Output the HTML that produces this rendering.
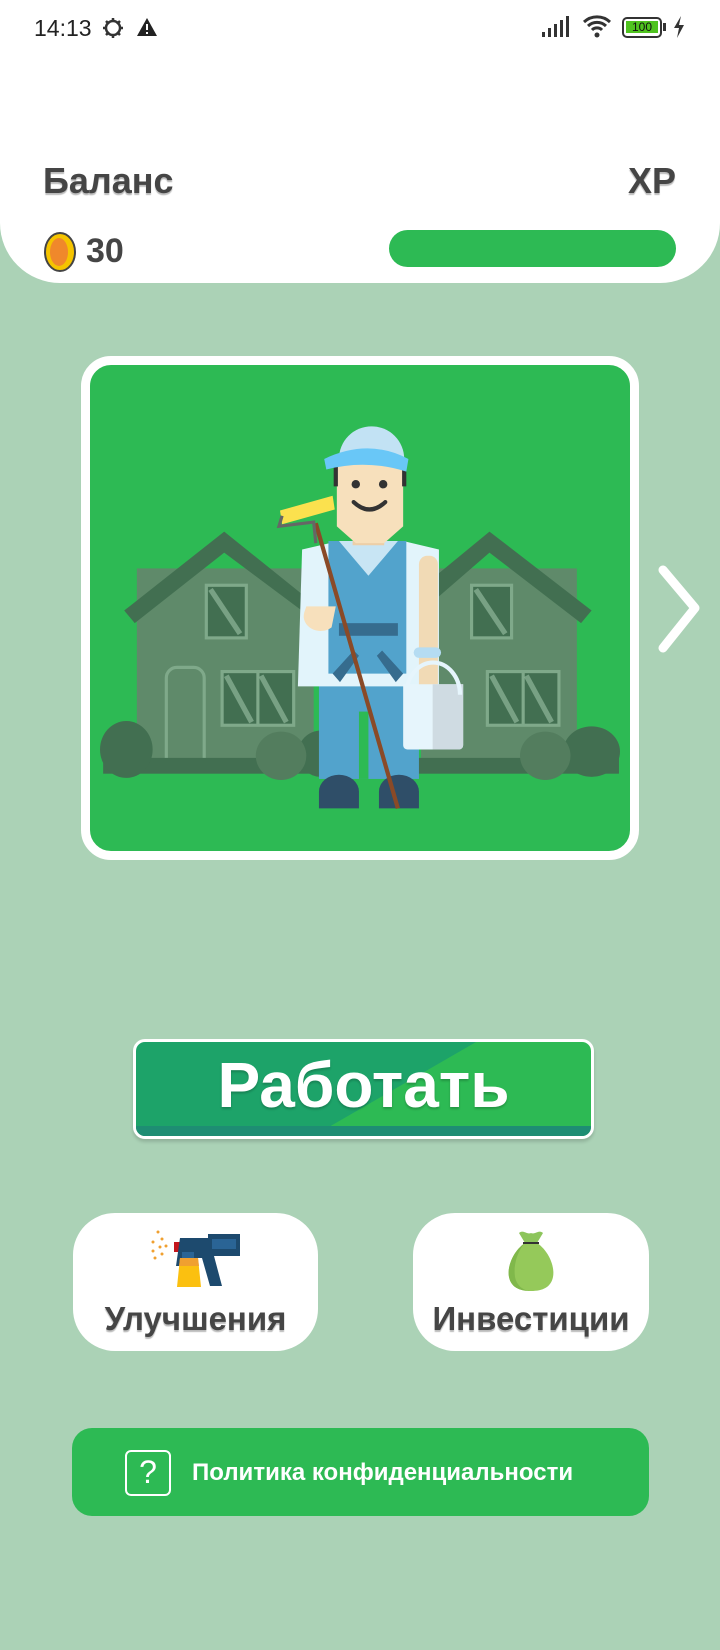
<!DOCTYPE html>
<html><head><meta charset="utf-8"><style>
*{margin:0;padding:0;box-sizing:border-box}
body{width:720px;height:1650px;background:#abd2b6;position:relative;overflow:hidden;font-family:"Liberation Sans","DejaVu Sans",sans-serif}
.hdr{position:absolute;left:0;top:0;width:720px;height:283px;background:#fff;border-radius:0 0 60px 60px}
.t{position:absolute;font-weight:bold;color:#454545}
.abs{position:absolute}
</style></head><body>
<div class="hdr"></div>
<div class="abs" style="left:34px;top:15px;font-size:23px;color:#222">14:13</div>
<svg class="abs" style="left:101px;top:16px" width="24" height="24" viewBox="0 0 24 24"><circle cx="12" cy="12" r="7" fill="none" stroke="#333" stroke-width="2.5"/><path d="M12 2v4M12 18v4M2 12h4M18 12h4M5 5l3 3M16 16l3 3M5 19l3-3M16 8l3-3" stroke="#333" stroke-width="2.5"/></svg>
<svg class="abs" style="left:136px;top:17px" width="22" height="20" viewBox="0 0 22 20"><path d="M11 1L21 19H1Z" fill="#222"/><rect x="10" y="7" width="2" height="6" fill="#fff"/><rect x="10" y="15" width="2" height="2" fill="#fff"/></svg>
<svg class="abs" style="left:542px;top:16px" width="32" height="22" viewBox="0 0 32 22"><rect x="0" y="16" width="3" height="5" fill="#333"/><rect x="6" y="12" width="3" height="9" fill="#333"/><rect x="12" y="8" width="3" height="13" fill="#333"/><rect x="18" y="4" width="3" height="17" fill="#333"/><rect x="24" y="0" width="3" height="21" fill="#333"/></svg>
<svg class="abs" style="left:582px;top:14px" width="30" height="24" viewBox="0 0 30 24"><path d="M2 8a19 19 0 0 1 26 0M6 12a13 13 0 0 1 18 0M10 16a7 7 0 0 1 10 0" fill="none" stroke="#333" stroke-width="3"/><circle cx="15" cy="21" r="2.5" fill="#333"/></svg>
<div class="abs" style="left:622px;top:17px;width:40px;height:21px;border:2.5px solid #333;border-radius:5px;background:#fff"><div style="margin:2px;height:12px;background:#4fc31f;font-size:12px;line-height:12px;text-align:center;color:#111">100</div></div>
<div class="abs" style="left:663px;top:23px;width:3px;height:8px;background:#333"></div>
<svg class="abs" style="left:672px;top:16px" width="14" height="22" viewBox="0 0 14 22"><path d="M9 0L2 12h5l-2 10 7-13H7z" fill="#333"/></svg>

<div class="t" style="left:43px;top:160px;font-size:36px;text-shadow:0 2px 1px #bbb">Баланс</div>
<div class="t" style="left:628px;top:160px;font-size:36px;text-shadow:0 2px 1px #bbb">XP</div>
<svg class="abs" style="left:43px;top:231px" width="36" height="42" viewBox="0 0 36 42"><ellipse cx="17" cy="21" rx="15" ry="19" fill="#f5c400" stroke="#444" stroke-width="2"/><ellipse cx="16" cy="21" rx="9" ry="14" fill="#f0882b"/></svg>
<div class="t" style="left:86px;top:232px;font-size:34px">30</div>
<div class="abs" style="left:389px;top:230px;width:287px;height:37px;background:#2dba54;border-radius:19px"></div>

<div class="abs" style="left:81px;top:356px;width:558px;height:504px;border:9px solid #fff;border-radius:30px;background:#2dba54;overflow:hidden"></div>
<svg class="abs" style="left:0;top:0" width="720" height="1000" viewBox="0 0 684 950">
<!-- houses -->
<g>
<rect x="130" y="540" width="168" height="190" fill="#5f8a6a"/>
<path d="M118 580L213 505L300 575L300 590L213 525L128 592Z" fill="#426f51"/>
<rect x="400" y="540" width="148" height="190" fill="#5f8a6a"/>
<path d="M380 575L465 505L562 580L552 592L465 525L390 590Z" fill="#426f51"/>
<rect x="196" y="556" width="38" height="50" fill="#426f51" stroke="#7fa98a" stroke-width="3"/>
<rect x="448" y="556" width="38" height="50" fill="#426f51" stroke="#7fa98a" stroke-width="3"/>
<rect x="211" y="638" width="68" height="51" fill="#426f51" stroke="#7fa98a" stroke-width="3"/>
<rect x="463" y="638" width="68" height="51" fill="#426f51" stroke="#7fa98a" stroke-width="3"/>
<line x1="245" y1="638" x2="245" y2="689" stroke="#7fa98a" stroke-width="3"/>
<line x1="497" y1="638" x2="497" y2="689" stroke="#7fa98a" stroke-width="3"/>
<path d="M158 722v-78a10 10 0 0 1 10-10h16a10 10 0 0 1 10 10v78" fill="none" stroke="#7fa98a" stroke-width="3"/>
<path d="M200 560l28 42M215 642l24 44M248 642l24 44M452 560l28 42M467 642l24 44M500 642l24 44" stroke="#8fb79a" stroke-width="5" opacity=".7"/>
<rect x="98" y="720" width="490" height="15" fill="#426f51"/>
<ellipse cx="120" cy="712" rx="25" ry="27" fill="#426f51"/>
<ellipse cx="305" cy="716" rx="22" ry="22" fill="#426f51"/>
<ellipse cx="267" cy="718" rx="24" ry="23" fill="#537d5e"/>
<ellipse cx="562" cy="714" rx="27" ry="24" fill="#426f51"/>
<ellipse cx="518" cy="718" rx="24" ry="23" fill="#537d5e"/>
</g>
<!-- man -->
<g>
<rect x="303" y="640" width="95" height="100" fill="#52a3cc"/>
<rect x="341" y="676" width="9" height="64" fill="#2dba54"/>
<path d="M303 752a19 16 0 0 1 38 0v16h-38z" fill="#2f4e68"/>
<path d="M360 752a19 16 0 0 1 38 0v16h-38z" fill="#2f4e68"/>
<path d="M287 522l35-8h61l34 8v130h-134z" fill="#e2f4fb"/>
<path d="M312 514h74v126h-74z" fill="#52a3cc"/>
<path d="M322 514l28 33 28-33z" fill="#c8e5f4"/>
<rect x="335" y="502" width="30" height="16" fill="#eccfa8"/>
<path d="M320 440h63v60l-18 16h-27l-18-16z" fill="#f7e0bc"/>
<path d="M317 440h4v22h-4zM382 440h4v22h-4z" fill="#333"/>
<path d="M322 436a30 30 0 0 1 62 0z" fill="#c2e2f4"/>
<path d="M308 436q42-20 80 0l-2 12q-38-12-76-2z" fill="#69c7f7"/>
<circle cx="338" cy="460" r="4" fill="#333"/><circle cx="364" cy="460" r="4" fill="#333"/>
<path d="M336 477q15 14 30 0" fill="none" stroke="#333" stroke-width="4" stroke-linecap="round"/>
<rect x="322" y="592" width="56" height="12" fill="#366c8e"/>
<path d="M316 640l20-22 5 5-18 25zM383 640l-20-22-5 5 18 25z" fill="#366c8e"/>
<rect x="398" y="528" width="18" height="160" rx="8" fill="#f1dab5"/>
<rect x="393" y="615" width="26" height="10" rx="5" fill="#b5dcf2"/>
<path d="M383 650h57v58a4 4 0 0 1-4 4h-49a4 4 0 0 1-4-4z" fill="#e6f5fc"/>
<path d="M411 650h29v58a4 4 0 0 1-4 4h-25z" fill="#cfdbe2"/>
<path d="M386 660a25 30 0 0 1 51 0" fill="none" stroke="#e6f5fc" stroke-width="4"/>
<path d="M289 582a16 14 0 0 0 26 14l4-20h-28z" fill="#f7e0bc"/>
<line x1="300" y1="497" x2="378" y2="768" stroke="#8a4a27" stroke-width="4"/>
<path d="M266 485l50-14 2 13-50 14z" fill="#fbe14e"/>
<path d="M268 490l-3 10 33-4 2 20" fill="none" stroke="#666" stroke-width="3"/>
</g>
</svg>
<svg class="abs" style="left:655px;top:560px" width="50" height="100" viewBox="0 0 50 100"><path d="M8 10L40 48L8 88" fill="none" stroke="#fff" stroke-width="9" stroke-linecap="round" stroke-linejoin="round"/></svg>

<div class="abs" style="left:133px;top:1039px;width:461px;height:100px;border:3px solid #fff;border-radius:12px;background:linear-gradient(150deg,#1da369 0%,#1da369 55%,#2dba54 55.1%);box-shadow:0 3px 3px rgba(0,0,0,.15);overflow:hidden"><div style="position:absolute;left:0;right:0;bottom:0;height:10px;background:#1e8d73"></div>
<div style="position:absolute;left:0;right:0;top:6px;text-align:center;color:#fff;font-weight:bold;font-size:64px;text-shadow:0 2px 2px rgba(0,0,0,.2)">Работать</div></div>

<div class="abs" style="left:73px;top:1213px;width:245px;height:138px;background:#fff;border-radius:42px"></div>
<div class="abs" style="left:413px;top:1213px;width:236px;height:138px;background:#fff;border-radius:42px"></div>
<svg class="abs" style="left:150px;top:1230px" width="92" height="62" viewBox="0 0 92 62"><g fill="#f0a030"><circle cx="8" cy="2" r="1.5"/><circle cx="12" cy="9" r="1.5"/><circle cx="3" cy="12" r="1.5"/><circle cx="10" cy="17" r="1.5"/><circle cx="3" cy="21" r="1.5"/><circle cx="12" cy="24" r="1.5"/><circle cx="5" cy="28" r="1.5"/><circle cx="16" cy="16" r="1.5"/></g><path d="M24 12h6v10h-6z" fill="#c4161c"/><path d="M30 8h28v-4h32v22h-26l8 30h-12l-8-28h-20v8h-6z" fill="#1d4a6e"/><rect x="62" y="9" width="24" height="10" fill="#2a6495"/><path d="M32 22h12v6h-12z" fill="#2a6495"/><path d="M30 28h18l3 29h-24z" fill="#fbc010"/><path d="M30 28h18l1 8h-20z" fill="#f0a030"/></svg>
<svg class="abs" style="left:505px;top:1229px" width="52" height="64" viewBox="0 0 52 64"><path d="M14 4c4-4 8 2 12 0 4 2 8-4 12 0l-6 10h-12z" fill="#8dc55c"/><path d="M20 14C8 22 2 38 4 48c2 10 10 14 22 14s20-4 22-14c2-10-4-26-16-34z" fill="#95c95a"/><path d="M20 14c-6 6-12 20-10 34 2 10 10 14 16 14-12 0-20-4-22-14-2-10 4-26 16-34z" fill="#80b84b"/><path d="M18 14h16" stroke="#333" stroke-width="2"/></svg>
<div class="t" style="left:73px;top:1300px;width:245px;text-align:center;font-size:33px;text-shadow:0 2px 1px #bbb">Улучшения</div>
<div class="t" style="left:413px;top:1300px;width:236px;text-align:center;font-size:33px;text-shadow:0 2px 1px #bbb">Инвестиции</div>

<div class="abs" style="left:72px;top:1428px;width:577px;height:88px;background:#2dba54;border-radius:20px"></div>
<div class="abs" style="left:125px;top:1450px;width:46px;height:46px;border:2.5px solid #fff;border-radius:6px;color:#fff;font-size:32px;line-height:40px;text-align:center">?</div>
<div class="abs" style="left:192px;top:1459px;color:#fff;font-weight:bold;font-size:24px">Политика конфиденциальности</div>
</body></html>
